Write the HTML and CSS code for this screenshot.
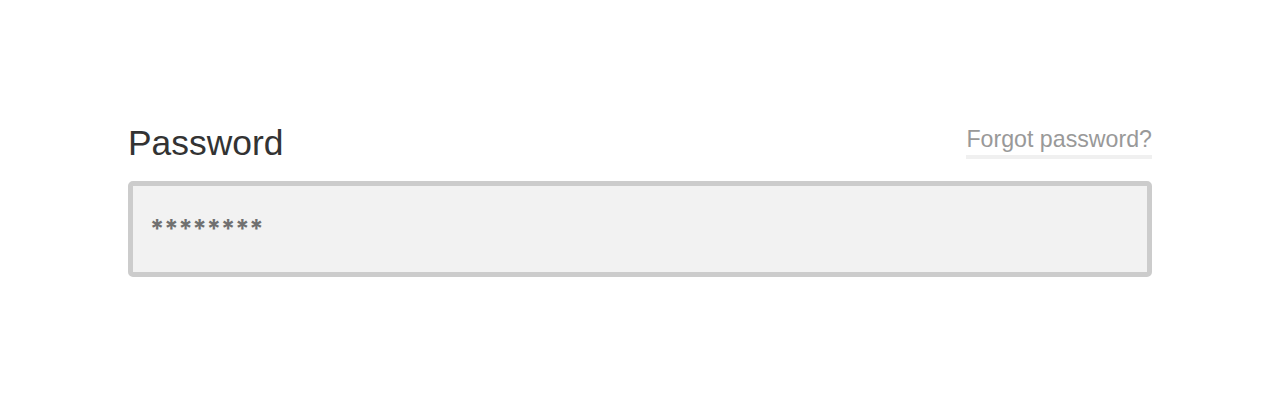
FILE: index.html
```html
<!DOCTYPE html>
<html lang="en">
<head>
<meta charset="utf-8">
<title>Password</title>
<link rel="stylesheet" href="styles.css">
</head>
<body>
<div class="field">
  <div class="field-head">
    <label class="label" for="pw">Password</label>
    <a class="forgot" href="#">Forgot password?</a>
  </div>
  <div class="input" id="pw">********</div>
</div>
</body>
</html>
```
FILE: styles.css
```css
html, body {
  margin: 0;
  padding: 0;
  background: #ffffff;
}
body {
  font-family: "Liberation Sans", Arial, sans-serif;
  padding: 121px 128px 0 128px;
}
.field {
  display: flex;
  flex-direction: column;
}
.field-head {
  display: flex;
  justify-content: space-between;
  align-items: flex-start;
  height: 60px;
}
.label {
  font-size: 35.4px;
  color: #333333;
  line-height: 44px;
}
.forgot {
  margin-top: 2px;
  font-size: 23.2px;
  line-height: 32px;
  color: #999999;
  text-decoration: none;
  border-bottom: 4px solid #f0f0f0;
}
.input {
  box-sizing: border-box;
  height: 96px;
  border: 5px solid #cccccc;
  border-radius: 5px;
  background: #f2f2f2;
  padding: 0 17px 2px;
  display: flex;
  align-items: center;
  font-family: Inter, "Liberation Sans", sans-serif;
  font-size: 25.4px;
  font-weight: 700;
  color: #707070;
}
```
